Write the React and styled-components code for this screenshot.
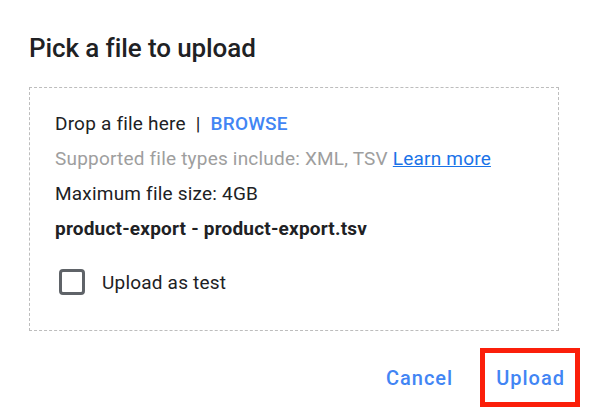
import React from 'react';
import styled, { createGlobalStyle } from 'styled-components';

const GlobalStyle = createGlobalStyle`
  body {
    margin: 0;
    background: #fff;
    font-family: Roboto, "Liberation Sans", Arial, sans-serif;
    color: #202124;
  }
`;

const Dialog = styled.div`
  width: 592px;
  height: 414px;
  box-sizing: border-box;
  padding: 33px 12px 0 29px;
`;

const Title = styled.h1`
  margin: 0;
  font-size: 26px;
  font-weight: 500;
  line-height: 30px;
  letter-spacing: -0.1px;
  color: #202124;
`;

const DropZone = styled.div`
  margin: 24px 21px 0 0;
  border: 1px dashed #bdbdbd;
  padding: 18px 25px 35px;
`;

const Line = styled.div`
  font-size: 19px;
  line-height: 35px;
  letter-spacing: 0.2px;
  color: ${(p) => (p.muted ? '#9e9e9e' : '#202124')};
  font-weight: ${(p) => (p.bold ? 700 : 400)};
  white-space: nowrap;
`;

const Sep = styled.span`
  margin: 0 10px;
`;

const Browse = styled.span`
  color: #4285f4;
  font-weight: 500;
`;

const LearnMore = styled.a`
  color: #1a73e8;
  text-decoration: underline;
  cursor: pointer;
`;

const CheckRow = styled.label`
  display: flex;
  align-items: center;
  gap: 17px;
  margin: 23px 0 0 4px;
  font-size: 19px;
  letter-spacing: 0.2px;
  color: #202124;
`;

const Box = styled.span`
  width: 26px;
  height: 26px;
  box-sizing: border-box;
  border: 3px solid #5f6368;
  border-radius: 4px;
`;

const Actions = styled.div`
  display: flex;
  justify-content: flex-end;
  gap: 12px;
  margin-top: 17px;
`;

const Button = styled.button`
  background: none;
  border: 5px solid ${(p) => (p.highlight ? '#fb1f0a' : 'transparent')};
  padding: 0 10px 0 11px;
  height: 59px;
  font-family: Roboto, "Liberation Sans", Arial, sans-serif;
  font-size: 20px;
  font-weight: 500;
  letter-spacing: 1px;
  color: #4285f4;
  cursor: pointer;
`;

export default function App() {
  return (
    <Dialog>
      <GlobalStyle />
      <Title>Pick a file to upload</Title>
      <DropZone>
        <Line>
          Drop a file here<Sep>|</Sep><Browse>BROWSE</Browse>
        </Line>
        <Line muted>
          Supported file types include: XML, TSV <LearnMore>Learn more</LearnMore>
        </Line>
        <Line>Maximum file size: 4GB</Line>
        <Line bold>product-export - product-export.tsv</Line>
        <CheckRow>
          <Box />
          Upload as test
        </CheckRow>
      </DropZone>
      <Actions>
        <Button>Cancel</Button>
        <Button highlight>Upload</Button>
      </Actions>
    </Dialog>
  );
}
